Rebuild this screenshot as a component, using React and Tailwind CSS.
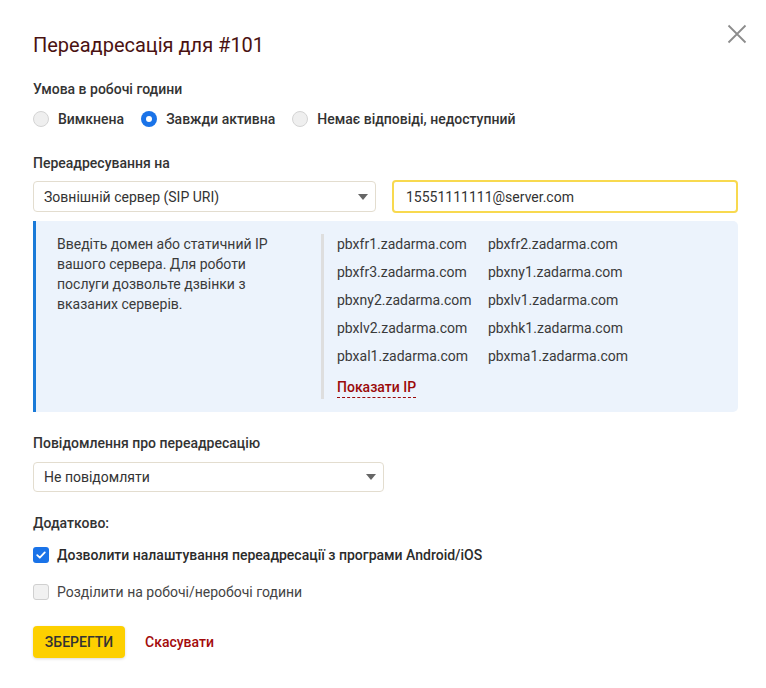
import React, { useState } from 'react';

const servers = [
    'pbxfr1.zadarma.com', 'pbxfr2.zadarma.com',
    'pbxfr3.zadarma.com', 'pbxny1.zadarma.com',
    'pbxny2.zadarma.com', 'pbxlv1.zadarma.com',
    'pbxlv2.zadarma.com', 'pbxhk1.zadarma.com',
    'pbxal1.zadarma.com', 'pbxma1.zadarma.com',
];

function Radio({ checked, label, onClick }) {
    return (
        <label onClick={onClick} className="flex cursor-pointer items-center gap-[9px]">
            {checked ? (
                <span className="flex h-4 w-4 items-center justify-center rounded-full bg-[#1a73e8]">
                    <span className="h-[6px] w-[6px] rounded-full bg-white" />
                </span>
            ) : (
                <span className="h-4 w-4 rounded-full border border-[#d4d4d4] bg-[#efefef]" />
            )}
            <span className="font-medium text-[#333]">{label}</span>
        </label>
    );
}

function Checkbox({ checked, label, onClick, bold }) {
    return (
        <label onClick={onClick} className="flex h-5 cursor-pointer items-center gap-2">
            {checked ? (
                <span className="flex h-4 w-4 items-center justify-center rounded-[3px] bg-[#1a73e8]">
                    <svg width="12" height="12" viewBox="0 0 12 12" fill="none">
                        <path d="M2.2 6.2 4.8 8.7 9.8 3.4" stroke="white" strokeWidth="1.8" strokeLinecap="round" strokeLinejoin="round" />
                    </svg>
                </span>
            ) : (
                <span className="h-4 w-4 rounded-[3px] border border-[#d0d0d0] bg-[#f1f1f1]" />
            )}
            <span className={bold ? 'font-medium text-[#2b2b2b]' : 'text-[#444]'}>{label}</span>
        </label>
    );
}

function Caret() {
    return (
        <svg width="10" height="6" viewBox="0 0 10 6">
            <path d="M0 0h10L5 6z" fill="#666" />
        </svg>
    );
}

export default function App() {
    const [mode, setMode] = useState(1);
    const [allowApp, setAllowApp] = useState(true);
    const [split, setSplit] = useState(false);

    return (
        <div className="relative min-h-[688px] w-[766px] bg-white pl-[33px] pr-[28px] pt-[31px] font-['Roboto',sans-serif] text-[14px] leading-5 text-[#333]">
            {/* закрити */}
            <button className="absolute right-[19px] top-[24px]">
                <svg width="20" height="20" viewBox="0 0 20 20">
                    <path d="M1.5 1.5 18.5 18.5M18.5 1.5 1.5 18.5" stroke="#8c8c8c" strokeWidth="1.8" />
                </svg>
            </button>

            <h1 className="h-7 text-[20px] leading-7 text-[#4a1212]">Переадресація для #101</h1>

            <div className="mt-[20px] font-medium">Умова в робочі години</div>
            <div className="mt-[10px] flex items-center gap-[17px]">
                <Radio checked={mode === 0} onClick={() => setMode(0)} label="Вимкнена" />
                <Radio checked={mode === 1} onClick={() => setMode(1)} label="Завжди активна" />
                <Radio checked={mode === 2} onClick={() => setMode(2)} label="Немає відповіді, недоступний" />
            </div>

            <div className="mt-[24px] font-medium">Переадресування на</div>
            <div className="mt-[7px] flex items-center gap-4">
                <div className="flex h-[31px] w-[343px] shrink-0 items-center justify-between rounded-[4px] border border-[#e3ddcf] pl-[10px] pr-[7px]">
                    <span>Зовнішній сервер (SIP URI)</span>
                    <Caret />
                </div>
                <input
                    defaultValue="15551111111@server.com"
                    className="h-[33px] w-[346px] rounded-[4px] border-2 border-[#f8d94f] px-[12px] text-[#333] outline-none"
                />
            </div>

            {/* підказка */}
            <div className="mt-2 flex h-[191px] rounded-r-[5px] border-l-[3px] border-[#1a7ad8] bg-[#ecf3fc]">
                <div className="w-[285px] pl-[21px] pt-[13px]">
                    <p className="w-[228px] text-[#3a3a3a]">
                        Введіть домен або статичний IP вашого сервера. Для роботи послуги дозвольте дзвінки з вказаних серверів.
                    </p>
                </div>
                <div className="my-[13px] border-l-[3px] border-[#dedede] pl-[13px]">
                    <div className="grid grid-cols-[151px_1fr] gap-y-2 text-[#3a3a3a]">
                        {servers.map((s) => (
                            <span key={s}>{s}</span>
                        ))}
                    </div>
                    <a href="#" className="mt-[12px] inline-block border-b border-dashed border-[#9b0a0a] font-medium leading-[19px] text-[#9b0a0a]">
                        Показати IP
                    </a>
                </div>
            </div>

            <div className="mt-[21px] font-medium">Повідомлення про переадресацію</div>
            <div className="mt-[9px] flex h-[30px] w-[351px] items-center justify-between rounded-[4px] border border-[#e3ddcf] pl-[10px] pr-[7px]">
                <span>Не повідомляти</span>
                <Caret />
            </div>

            <div className="mt-[21px] font-medium">Додатково:</div>
            <div className="mt-3">
                <Checkbox checked={allowApp} onClick={() => setAllowApp(!allowApp)} bold label="Дозволити налаштування переадресації з програми Android/iOS" />
            </div>
            <div className="mt-[17px]">
                <Checkbox checked={split} onClick={() => setSplit(!split)} label="Розділити на робочі/неробочі години" />
            </div>

            <div className="mt-6 flex items-center gap-5">
                <button className="h-8 w-[92px] rounded-[4px] bg-[#fdd000] font-medium text-[#333] shadow-[0_1px_3px_rgba(0,0,0,0.15)]">
                    ЗБЕРЕГТИ
                </button>
                <a href="#" className="font-medium text-[#a30b0b]">Скасувати</a>
            </div>
        </div>
    );
}
